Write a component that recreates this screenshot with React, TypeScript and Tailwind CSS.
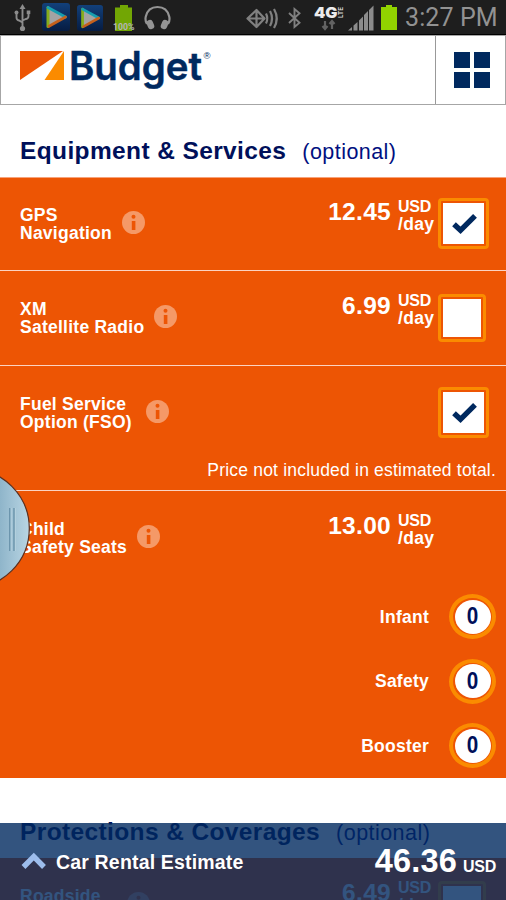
import React from "react";

function PlayTile({ size }: { size: number }) {
  return (
    <svg width={size} height={size} viewBox="0 0 28 28" className="shrink-0">
      <defs>
        <linearGradient id="tile" x1="0" y1="0" x2="0" y2="1">
          <stop offset="0" stopColor="#12407a" />
          <stop offset="1" stopColor="#061c42" />
        </linearGradient>
      </defs>
      <rect width="28" height="28" rx="3" fill="url(#tile)" />
      <path d="M6 4.500 23.500 14 6 23.500Z" fill="#a3a3a3" />
      <path d="M6 4.500V23.500" stroke="#86ad1c" strokeWidth="3" strokeLinecap="round" />
      <path d="M6 4.500 23.500 14" stroke="#169fb0" strokeWidth="2.800" strokeLinecap="round" />
      <path d="M7 23.300 23.500 14" stroke="#c4601c" strokeWidth="2.800" strokeLinecap="round" />
    </svg>
  );
}

function StatusBar() {
  return (
    <div className="flex h-[35px] shrink-0 items-start bg-[#1e1e1e] border-b border-black">
      <svg width="18" height="28" viewBox="0 0 18 28" className="ml-[14px] mt-[4px]" fill="none" stroke="#8c8c8c" strokeWidth="1.900">
        <path d="M8.500 4v20M2.500 9v4.500q0 2.500 2.500 3l3.500 2M14.500 9v3q0 2.500-2.500 3l-3.500 1.500" />
        <path d="M8.500 0 11.500 5h-6Z" fill="#8c8c8c" stroke="none" />
        <circle cx="8.500" cy="24.500" r="2.600" fill="#8c8c8c" stroke="none" />
        <circle cx="2.500" cy="8.500" r="2" fill="#8c8c8c" stroke="none" />
        <rect x="12.700" y="6.500" width="3.600" height="3.600" fill="#8c8c8c" stroke="none" />
      </svg>
      <div className="ml-[10px] mt-[3px]"><PlayTile size={28} /></div>
      <div className="ml-[7px] mt-[5px]"><PlayTile size={26} /></div>
      <svg width="24" height="28" viewBox="0 0 24 28" className="ml-[9px] mt-[4px]">
        <path d="M3 3.500h5V1h8v2.500h4V27H3Z" fill="#72a604" />
        <text x="1" y="25.500" textLength="21.500" lengthAdjust="spacingAndGlyphs" fontFamily="Roboto, sans-serif" fontSize="9" fontWeight="700" fill="#b5b5b5">100%</text>
      </svg>
      <svg width="28" height="26" viewBox="0 0 28 26" className="ml-[8px] mt-[5px]" fill="none" stroke="#949494">
        <path d="M3 19Q.8 15.500 1.800 11.500Q4 2 13.500 2T25.200 11.500Q26.200 15.500 24 19" strokeWidth="2.200" />
        <rect x="3" y="14.500" width="6.500" height="9.500" rx="3" fill="#949494" stroke="none" transform="rotate(-22 7 19)" />
        <rect x="17.500" y="14.500" width="6.500" height="9.500" rx="3" fill="#949494" stroke="none" transform="rotate(22 20 19)" />
      </svg>
      <svg width="160" height="34" viewBox="245 0 160 34" className="ml-auto shrink-0" fill="none">
        <g stroke="#808080" strokeWidth="2.200">
          <path d="M256.500 10 264.500 18.500 256.500 27 247.500 18.500ZM256.500 10V27M247.500 18.500H264" strokeLinejoin="round" />
          <path d="M266 13.500q2.500 5 0 10M270 11q4 7.500 0 15M274 9q5.500 9.500 0 19" />
          <path d="M289 13 299.500 22.800 294.500 27V9L299.500 13.200 289 23" strokeWidth="1.900" />
        </g>
        <text x="314" y="18" textLength="23.500" lengthAdjust="spacingAndGlyphs" fontFamily="Inter, sans-serif" fontSize="15" fontWeight="900" fill="#ececec">4G</text>
        <text transform="translate(343 18) rotate(-90)" textLength="11" lengthAdjust="spacingAndGlyphs" fontFamily="Inter, sans-serif" fontSize="6.500" fontWeight="700" fill="#d8d8d8">LTE</text>
        <path d="M325 21v8M322.500 26l2.500 3 2.500-3M332 29v-8M329.500 24l2.500-3 2.500 3" stroke="#626262" strokeWidth="2.200" />
        <path d="M348 30.500 352 27v3.500ZM353.500 25.500l4-3.500v8.500h-4ZM359 20.500l4-4v14h-4ZM364 15l4-4v19.500h-4ZM369 10l4.500-4.500v25H369Z" fill="#8c8c8c" />
        <path d="M381 7h5V5h6v2h5v23h-16Z" fill="#91d300" />
      </svg>
      <div className="w-[101px] pt-[2px] font-[Roboto,sans-serif] text-[25px] leading-[32px] tracking-[0.1px] whitespace-nowrap text-[#929292]">3:27 PM</div>
    </div>
  );
}

function Header() {
  return (
    <div className="flex h-[70px] shrink-0 border border-[#a6a6a6] bg-white">
      <svg width="220" height="66" viewBox="1 36 220 66" className="shrink-0">
        <path d="M20 51H63L20 80Z" fill="#ed5504" />
        <path d="M64 51V80H44.500Z" fill="#fb8b00" />
        <text x="69" y="80" textLength="133" lengthAdjust="spacingAndGlyphs" fontFamily="Inter, sans-serif" fontSize="39" fontWeight="600" fill="#00295f" stroke="#00295f" strokeWidth="0.500">Budget</text>
        <text x="203.500" y="58.500" fontFamily="Liberation Sans, sans-serif" fontSize="9.500" fill="#00295f">®</text>
      </svg>
      <div className="ml-auto flex w-[70px] items-center justify-center border-l border-[#999] pl-[3px]">
        <div className="grid grid-cols-2 gap-[4px]">
          <div className="size-4 bg-[#00295f]" />
          <div className="size-4 bg-[#00295f]" />
          <div className="size-4 bg-[#00295f]" />
          <div className="size-4 bg-[#00295f]" />
        </div>
      </div>
    </div>
  );
}

function SectionTitle({ title, className }: { title: string; className: string }) {
  return (
    <div className={"flex shrink-0 items-baseline bg-white pl-[20px] whitespace-nowrap " + className}>
      <h2 className="text-[24.500px] leading-[28px] font-bold tracking-[0.38px] text-[#00105a]">{title}</h2>
      <span className="ml-[16px] text-[21.500px] leading-[26px] tracking-[0.45px] text-[#000f80]">(optional)</span>
    </div>
  );
}

function InfoIcon({ gap }: { gap: string }) {
  return (
    <svg width="23" height="23" viewBox="0 0 23 23" className={"mt-[5px] shrink-0 " + gap}>
      <circle cx="11.500" cy="11.500" r="11.500" fill="#f59967" />
      <circle cx="11.500" cy="5.800" r="2" fill="#ed5504" />
      <rect x="9.800" y="10" width="3.600" height="9" fill="#ed5504" />
    </svg>
  );
}

function CheckBox({ checked }: { checked: boolean }) {
  return (
    <div className="rounded-[4px] border-[3px] border-[#fb8b00] p-[2px]">
      <div className={checked ? "size-[41px] bg-white" : "size-[38px] bg-white"}>
        {checked && (
          <svg width="41" height="41" viewBox="0 0 41 41">
            <path d="M11 21.300 17.500 27.300 32 12.800" fill="none" stroke="#00295f" strokeWidth="5.400" />
          </svg>
        )}
      </div>
    </div>
  );
}

type ItemProps = {
  lines: string[];
  price?: string;
  checked?: boolean;
  pad?: string;
  boxPad?: string;
  iconGap?: string;
};

function ItemHead({ lines, price, checked, pad = "pt-px", boxPad = "pt-[19px]", iconGap = "ml-[10px]" }: ItemProps) {
  return (
    <div className={"flex items-start " + pad}>
      <div className="flex flex-1 pt-[28px] pl-[20px]">
        <div className="text-[17.500px] leading-[18px] font-bold tracking-[0.25px] whitespace-nowrap">
          {lines.map((line) => (
            <div key={line}>{line}</div>
          ))}
        </div>
        <InfoIcon gap={iconGap} />
      </div>
      {price && (
        <>
          <div className="pt-[22px] pr-[6px] text-[24.500px] leading-[24px] font-bold tracking-[0.3px]">{price}</div>
          <div className="w-[41px] pt-[20px] pl-px font-bold">
            <div className="text-[16px] leading-[18px] tracking-[-0.3px]">USD</div>
            <div className="text-[17.500px] leading-[17px] tracking-[0.3px]">/day</div>
          </div>
        </>
      )}
      <div className={"flex w-[68px] " + boxPad}>{checked !== undefined && <CheckBox checked={checked} />}</div>
    </div>
  );
}

function Counter({ label }: { label: string }) {
  return (
    <div className="flex h-[45px] items-center justify-end pr-[10px]">
      <span className="mr-[20px] text-[17.500px] leading-[20px] font-bold tracking-[0.25px]">{label}</span>
      <div className="h-[45px] w-[47px] rounded-[50%] border-4 border-[#fb8b00] p-[1.500px]">
        <div className="flex h-full items-center justify-center rounded-[50%] bg-white text-[23px] leading-none font-bold text-[#00105a]">
          <span className="scale-x-90">0</span>
        </div>
      </div>
    </div>
  );
}

export default function App() {
  return (
    <div className="relative flex h-[900px] w-[506px] flex-col overflow-hidden bg-white font-['Liberation_Sans',Arial,sans-serif] text-white">
      <StatusBar />
      <Header />
      <SectionTitle title="Equipment & Services" className="h-[72px] pt-[32px]" />
      <div className="shrink-0 bg-[#ed5504]">
        <div className="h-[93px] border-t border-[#f7a27a]">
          <ItemHead lines={["GPS", "Navigation"]} price="12.45" checked pad="pt-0" boxPad="pt-[20px]" />
        </div>
        <div className="h-[95px] border-t border-[#fbd3c2]">
          <ItemHead lines={["XM", "Satellite Radio"]} price="6.99" checked={false} boxPad="pt-[22px]" />
        </div>
        <div className="flex h-[125px] flex-col border-t border-[#fbd3c2]">
          <ItemHead lines={["Fuel Service", "Option (FSO)"]} checked boxPad="pt-[20px]" iconGap="ml-[14px]" />
          <p className="mt-auto pr-[10px] pb-[10px] text-right text-[17.500px] leading-[20px] tracking-[0.2px]">Price not included in estimated total.</p>
        </div>
        <div className="h-[288px] border-t border-[#fbd3c2]">
          <ItemHead lines={["Child", "Safety Seats"]} price="13.00" />
          <div className="mt-[38px] flex flex-col gap-[19.500px]">
            <Counter label="Infant" />
            <Counter label="Safety" />
            <Counter label="Booster" />
          </div>
        </div>
      </div>
      <SectionTitle title="Protections & Coverages" className="h-[80px] pt-[40px]" />
      <div className="h-[93px] shrink-0 bg-[#ed5504]">
        <ItemHead lines={["Roadside", "Assistance"]} price="6.49" checked={false} boxPad="pt-[22px]" iconGap="ml-[12px]" />
      </div>

      <svg width="32" height="110" viewBox="0 474 32 110" className="absolute top-[474px] left-0">
        <defs>
          <linearGradient id="tab" gradientUnits="userSpaceOnUse" x1="0" y1="0" x2="30" y2="0">
            <stop offset="0" stopColor="#8fb5ca" />
            <stop offset="1" stopColor="#bad6e4" />
          </linearGradient>
        </defs>
        <circle cx="-30.300" cy="528.500" r="59.600" fill="url(#tab)" stroke="#5b3020" strokeWidth="1.200" />
        <path d="M9.800 508v43M14 508v43" stroke="#6791a9" strokeWidth="1.400" />
        <path d="M11.200 508v43M15.400 508v43" stroke="#b9d3e0" strokeWidth="0.800" />
      </svg>

      <div className="absolute inset-x-0 bottom-0 flex h-[77px] items-start bg-[#00295f]/80 font-bold">
        <svg width="26" height="18" viewBox="0 0 26 18" className="mt-[29px] ml-[21px]">
          <path d="M2.500 15 12.800 4.500 23 15" fill="none" stroke="#9dbdec" strokeWidth="5.400" />
        </svg>
        <span className="mt-[28px] ml-[9px] text-[19.500px] leading-[22px] tracking-[0.17px]">Car Rental Estimate</span>
        <div className="mt-[19px] ml-auto flex items-baseline pr-[10px]">
          <span className="text-[32.500px] leading-[38px] tracking-[0.2px]">46.36</span>
          <span className="ml-[6px] text-[16px] tracking-[-0.3px]">USD</span>
        </div>
      </div>
    </div>
  );
}
